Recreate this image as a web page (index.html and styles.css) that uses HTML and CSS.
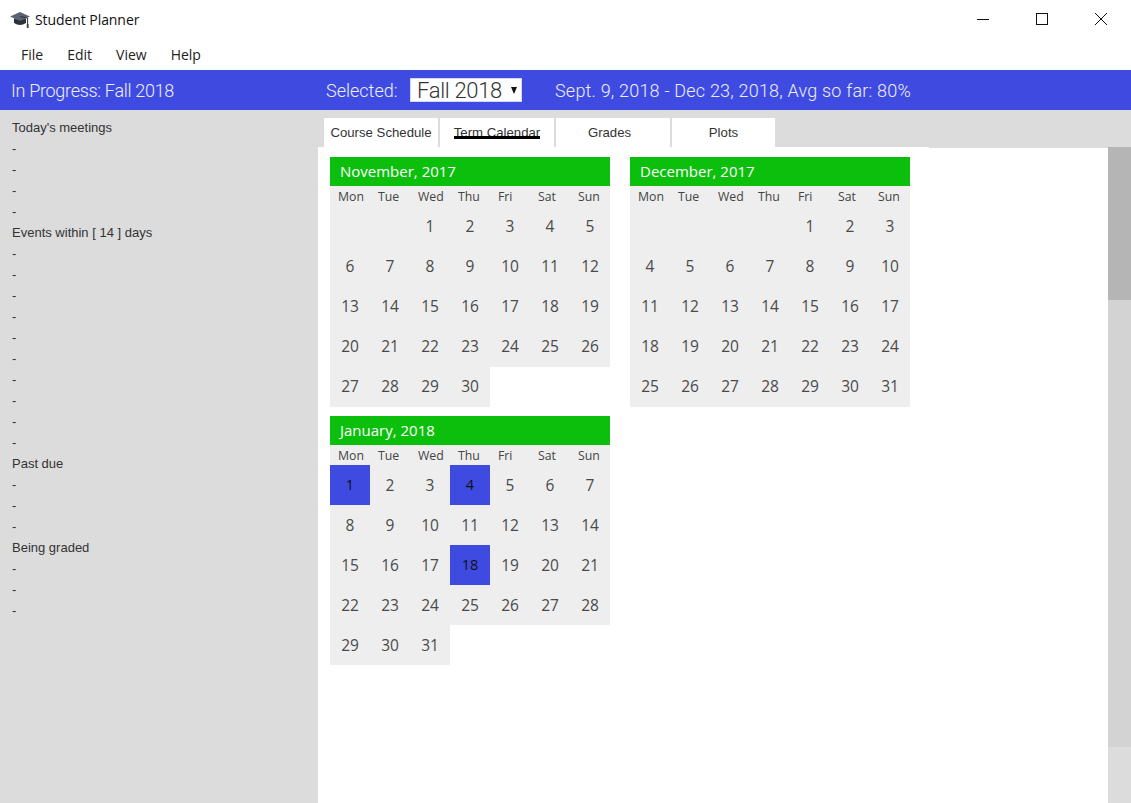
FILE: index.html
```html
<!DOCTYPE html>
<html lang="en">
<head>
    <meta charset="UTF-8">
    <title>Student Planner</title>
    <link rel="stylesheet" href="styles.css">
</head>
<body>

    <div class="titlebar">
        <svg class="app-icon" width="20" height="20" viewBox="0 0 20 20">
            <path d="M4 9.5 L4 14 Q10 18 16 14 L16 9.5 Z" fill="#2f3238"/>
            <path d="M0 7.5 L10 3 L20 7.5 L10 12 Z" fill="#5a6472"/>
            <path d="M10 7.5 L17.6 9 L17.6 16" fill="none" stroke="#2f3238" stroke-width="1"/>
            <rect x="16.8" y="15" width="1.8" height="4" fill="#3a3f46"/>
        </svg>
        <span class="app-title">Student Planner</span>
        <div class="window-controls">
            <svg width="12" height="12" viewBox="0 0 12 12"><path d="M0 6.5 H12" stroke="#111" fill="none"/></svg>
            <svg width="12" height="12" viewBox="0 0 12 12"><rect x="0.5" y="0.5" width="11" height="11" stroke="#111" fill="none"/></svg>
            <svg width="12" height="12" viewBox="0 0 12 12"><path d="M0 0 L12 12 M12 0 L0 12" stroke="#111" fill="none"/></svg>
        </div>
    </div>

    <div class="menubar">
        <span>File</span>
        <span>Edit</span>
        <span>View</span>
        <span>Help</span>
    </div>

    <div class="topbar">
        <span class="progress">In Progress: Fall 2018</span>
        <span class="selected-label">Selected:</span>
        <div class="term-select">Fall 2018</div>
        <span class="term-info">Sept. 9, 2018 - Dec 23, 2018, Avg so far: 80%</span>
    </div>

    <div class="content">
        <div class="sidebar">
            <p>Today's meetings</p>
            <p>-</p><p>-</p><p>-</p><p>-</p>
            <p>Events within [ 14 ] days</p>
            <p>-</p><p>-</p><p>-</p><p>-</p><p>-</p><p>-</p><p>-</p><p>-</p><p>-</p><p>-</p>
            <p>Past due</p>
            <p>-</p><p>-</p><p>-</p>
            <p>Being graded</p>
            <p>-</p><p>-</p><p>-</p>
        </div>

        <div class="main">
            <div class="tabs">
                <div class="tab">Course Schedule</div>
                <div class="tab"><span class="active">Term Calendar</span></div>
                <div class="tab tab-grades">Grades</div>
                <div class="tab tab-short">Plots</div>
            </div>

            <div class="panel">
                <div class="calendars">

                    <div class="month tall">
                        <div class="month-name">November, 2017</div>
                        <div class="days">
                            <span class="wd">Mon</span><span class="wd">Tue</span><span class="wd">Wed</span><span class="wd">Thu</span><span class="wd">Fri</span><span class="wd">Sat</span><span class="wd">Sun</span>
                            <span></span><span></span><span>1</span><span>2</span><span>3</span><span>4</span><span>5</span>
                            <span>6</span><span>7</span><span>8</span><span>9</span><span>10</span><span>11</span><span>12</span>
                            <span>13</span><span>14</span><span>15</span><span>16</span><span>17</span><span>18</span><span>19</span>
                            <span>20</span><span>21</span><span>22</span><span>23</span><span>24</span><span>25</span><span>26</span>
                            <span>27</span><span>28</span><span>29</span><span>30</span>
                        </div>
                    </div>

                    <div class="month tall">
                        <div class="month-name">December, 2017</div>
                        <div class="days">
                            <span class="wd">Mon</span><span class="wd">Tue</span><span class="wd">Wed</span><span class="wd">Thu</span><span class="wd">Fri</span><span class="wd">Sat</span><span class="wd">Sun</span>
                            <span></span><span></span><span></span><span></span><span>1</span><span>2</span><span>3</span>
                            <span>4</span><span>5</span><span>6</span><span>7</span><span>8</span><span>9</span><span>10</span>
                            <span>11</span><span>12</span><span>13</span><span>14</span><span>15</span><span>16</span><span>17</span>
                            <span>18</span><span>19</span><span>20</span><span>21</span><span>22</span><span>23</span><span>24</span>
                            <span>25</span><span>26</span><span>27</span><span>28</span><span>29</span><span>30</span><span>31</span>
                        </div>
                    </div>

                    <div class="month">
                        <div class="month-name">January, 2018</div>
                        <div class="days">
                            <span class="wd">Mon</span><span class="wd">Tue</span><span class="wd">Wed</span><span class="wd">Thu</span><span class="wd">Fri</span><span class="wd">Sat</span><span class="wd">Sun</span>
                            <span class="due">1</span><span>2</span><span>3</span><span class="due">4</span><span>5</span><span>6</span><span>7</span>
                            <span>8</span><span>9</span><span>10</span><span>11</span><span>12</span><span>13</span><span>14</span>
                            <span>15</span><span>16</span><span>17</span><span class="due">18</span><span>19</span><span>20</span><span>21</span>
                            <span>22</span><span>23</span><span>24</span><span>25</span><span>26</span><span>27</span><span>28</span>
                            <span>29</span><span>30</span><span>31</span>
                        </div>
                    </div>

                </div>

                <div class="scrollbar">
                    <div class="thumb"></div>
                    <div class="track"></div>
                </div>
            </div>
        </div>
    </div>

</body>
</html>
```

FILE: styles.css
```css
html, body {
    margin: 0;
    height: 803px;
    overflow: hidden;
    background: white;
}

body {
    font-family: 'Open Sans', sans-serif;
    color: #111;
}

.titlebar {
    height: 38px;
    display: flex;
    align-items: center;
    padding-left: 10px;
}

.app-icon {
    margin-right: 5px;
}

.app-title {
    font-size: 14px;
    letter-spacing: -0.07px;
}

.window-controls {
    margin-left: auto;
    padding-right: 24px;
    display: flex;
    gap: 47px;
}

.menubar {
    height: 32px;
    display: flex;
    padding-left: 21px;
    gap: 24px;
    font-size: 14px;
    line-height: 34px;
    color: #222;
}

.topbar {
    height: 40px;
    background: #3f4be0;
    color: #eef;
    display: flex;
    align-items: center;
    font-family: 'Roboto', sans-serif;
    font-weight: 300;
    font-size: 18px;
}

.progress {
    width: 326px;
    padding-left: 11px;
    box-sizing: border-box;
    letter-spacing: -0.3px;
}

.selected-label {
    width: 84px;
}

.term-select {
    width: 112px;
    height: 24px;
    box-sizing: border-box;
    border: 1px solid #d5d8fa;
    background: white;
    color: #333;
    font-size: 22px;
    letter-spacing: -0.33px;
    padding: 0 4px 0 6px;
    display: flex;
    align-items: center;
    justify-content: space-between;
    margin-right: 33px;
}

.term-select::after {
    content: "";
    border-left: 3.5px solid transparent;
    border-right: 3.5px solid transparent;
    border-top: 7px solid #111;
}

.term-info {
    letter-spacing: 0.2px;
}

.content {
    display: flex;
    height: 693px;
}

.sidebar {
    width: 318px;
    flex-shrink: 0;
    box-sizing: border-box;
    background: #dcdcdc;
    padding: 7px 0 0 12px;
    font-family: 'Liberation Sans', sans-serif;
    font-size: 13px;
    line-height: 21px;
    color: #333;
}

.sidebar p {
    margin: 0;
}

.main {
    flex: 1;
    display: flex;
    flex-direction: column;
    background: #dcdcdc;
}

.tabs {
    display: flex;
    gap: 2px;
    padding: 8px 0 0 6px;
}

.tab {
    width: 114px;
    height: 29px;
    box-sizing: border-box;
    background: white;
    font-family: 'Liberation Sans', sans-serif;
    font-size: 13.2px;
    line-height: 29px;
    text-align: center;
    color: #333;
}

.tab-grades {
    padding-right: 7px;
}

.tab-short {
    width: 103px;
}

.active {
    display: inline-block;
    position: relative;
}

.active::after {
    content: "";
    position: absolute;
    left: 0;
    right: 0;
    top: 18px;
    height: 3px;
    background: black;
}

.panel {
    flex: 1;
    display: flex;
    min-height: 0;
}

.calendars {
    flex: 1;
    background: linear-gradient(to right, white 611px, #dcdcdc 611px) top / 100% 1px no-repeat, white;
    display: flex;
    flex-wrap: wrap;
    align-content: flex-start;
    align-items: flex-start;
    gap: 9px 20px;
    padding: 10px 12px;
}

.month {
    width: 280px;
}

.month-name {
    height: 29px;
    padding-left: 10px;
    background: #0cbf0c;
    color: white;
    font-size: 15px;
    line-height: 29px;
}

.days {
    display: grid;
    grid-template-columns: repeat(7, 40px);
    grid-template-rows: 20px;
    grid-auto-rows: 40px;
    font-size: 15.5px;
    color: #4a4a4a;
}

.tall .days {
    grid-template-rows: 21px;
}

.days span {
    background: #eeeeee;
    text-align: center;
    line-height: 40px;
}

.tall .days span {
    line-height: 38px;
}

.days .wd,
.tall .days .wd {
    padding-left: 8px;
    text-align: left;
    font-size: 12.3px;
    line-height: 21px;
    color: #444;
}

.days .due {
    background: #3f4be0;
    color: #111;
    font-size: 14.5px;
}

.scrollbar {
    width: 23px;
    background: #dcdcdc;
}

.thumb {
    height: 153px;
    background: #b5b5b5;
}

.track {
    height: 447px;
    background: #d3d3d3;
}
```
